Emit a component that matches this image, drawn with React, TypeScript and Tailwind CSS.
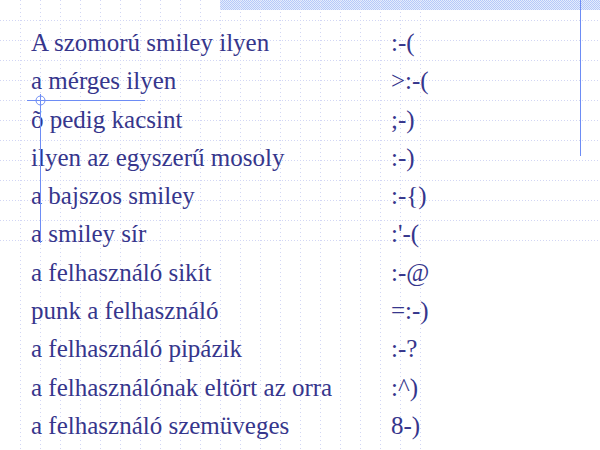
import React from "react";

const rows: [string, string][] = [
  ["A szomorú smiley ilyen", ":-("],
  ["a mérges ilyen", ">:-("],
  ["õ pedig kacsint", ";-)"],
  ["ilyen az egyszerű mosoly", ":-)"],
  ["a bajszos smiley", ":-{)"],
  ["a smiley sír", ":'-("],
  ["a felhasználó sikít", ":-@"],
  ["punk a felhasználó", "=:-)"],
  ["a felhasználó pipázik", ":-?"],
  ["a felhasználónak eltört az orra", ":^)"],
  ["a felhasználó szemüveges", "8-)"],
];

function Background() {
  const vx = Array.from({ length: 21 }, (_, i) => 20 + i * 20);
  const hy = Array.from({ length: 12 }, (_, i) => 20 + i * 20);
  return (
    <svg className="absolute inset-0" width="600" height="450" viewBox="0 0 600 450">
      <defs>
        <pattern id="chk" width="2" height="2" patternUnits="userSpaceOnUse">
          <rect width="2" height="2" fill="#e4ecfd" />
          <rect x="0" y="0" width="1" height="1" fill="#b6c9f8" />
          <rect x="1" y="1" width="1" height="1" fill="#b6c9f8" />
        </pattern>
      </defs>
      <rect x="220" y="0" width="380" height="10" fill="url(#chk)" />
      {vx.map((x) => (
        <line key={"v" + x} x1={x + 0.5} y1="0" x2={x + 0.5} y2="450" stroke="#d2d6f4" strokeWidth="1" strokeDasharray="1 3" />
      ))}
      {hy.map((y) => (
        <line key={"h" + y} x1="0" y1={y + 0.5} x2="600" y2={y + 0.5} stroke="#d2d6f4" strokeWidth="1" strokeDasharray="1 2" />
      ))}
    </svg>
  );
}

function Overlay() {
  return (
    <svg className="absolute inset-0 pointer-events-none" width="600" height="450" viewBox="0 0 600 450">
      <line x1="580.5" y1="0" x2="580.5" y2="156" stroke="#6d8cf5" strokeWidth="1" />
      <line x1="27" y1="100.5" x2="145" y2="100.5" stroke="#6d8cf5" strokeWidth="1" />
      <line x1="40.5" y1="94" x2="40.5" y2="243" stroke="#6d8cf5" strokeWidth="1" />
      <circle cx="40.5" cy="100.5" r="4.5" fill="none" stroke="#6d8cf5" strokeWidth="1" />
    </svg>
  );
}

export default function App() {
  return (
    <div className="relative w-[600px] h-[450px] overflow-hidden bg-white">
      <Background />
      <div
        className="relative flex flex-col pt-[24px] pl-[31px] text-[25px] leading-[38.3px] text-[#36368c]"
        style={{ fontFamily: '"Liberation Serif", "Times New Roman", serif' }}
      >
        {rows.map(([a, b], i) => (
          <div key={i} className="grid grid-cols-[360px_1fr] whitespace-nowrap">
            <span>{a}</span>
            <span>{b}</span>
          </div>
        ))}
      </div>
      <Overlay />
    </div>
  );
}
